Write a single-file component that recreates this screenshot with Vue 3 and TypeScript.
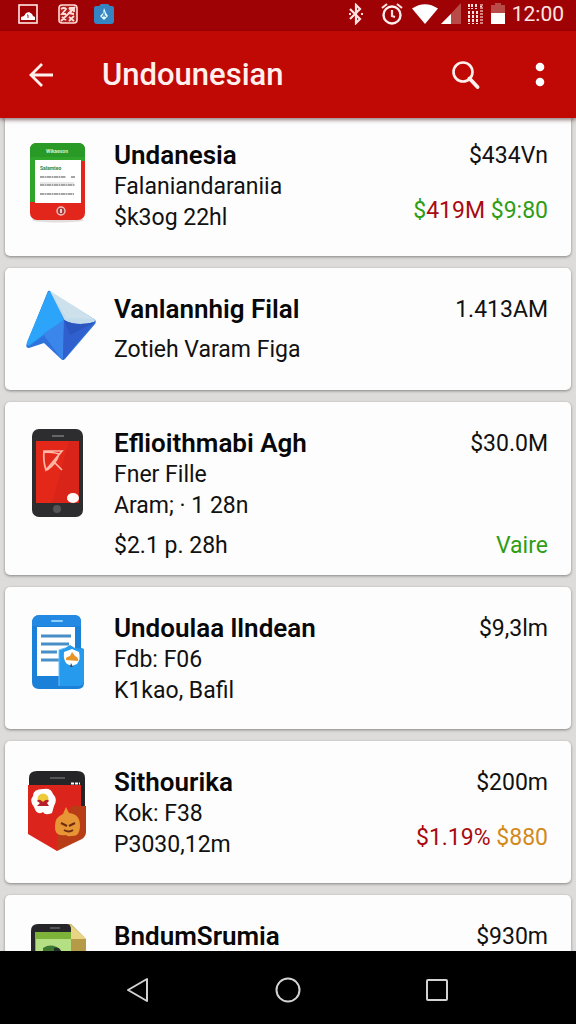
<script setup lang="ts">
type Tone = 'red' | 'green' | 'amber'
interface Change { text: string; tone: Tone }
interface Item {
  art: string
  title: string
  lines: string[]
  price: string
  changes: Change[]
}

const items: Item[] = [
  {
    art: 'report',
    title: 'Undanesia',
    lines: ['Falaniandaraniia', '$k3og 22hl'],
    price: '$434Vn',
    changes: [
      { text: '$', tone: 'green' },
      { text: '419M', tone: 'red' },
      { text: ' $9:80', tone: 'green' },
    ],
  },
  { art: 'kite', title: 'Vanlannhig Filal', lines: ['Zotieh Varam Figa'], price: '1.413AM', changes: [] },
  {
    art: 'phone',
    title: 'Eflioithmabi Agh',
    lines: ['Fner Fille', 'Aram; · 1 28n', '$2.1 p. 28h'],
    price: '$30.0M',
    changes: [{ text: 'Vaire', tone: 'green' }],
  },
  { art: 'document', title: 'Undoulaa llndean', lines: ['Fdb: F06', 'K1kao, Bafil'], price: '$9,3lm', changes: [] },
  {
    art: 'badge',
    title: 'Sithourika',
    lines: ['Kok: F38', 'P3030,12m'],
    price: '$200m',
    changes: [
      { text: '$1.19%', tone: 'red' },
      { text: ' $880', tone: 'amber' },
    ],
  },
  { art: 'map', title: 'BndumSrumia', lines: [], price: '$930m', changes: [] },
]
</script>

<template>
  <div class="screen">
    <div class="status">
      <div class="status-group left">
        <svg width="20" height="20" viewBox="0 0 20 20">
          <rect x="1" y="1" width="18" height="18" fill="none" stroke="#ffe9e6" stroke-width="1.6" />
          <path d="M3 16v-3l3-1 2-3 3-1 3 2 1 2 2 1v3z" fill="#fff" />
          <path d="M9 11l1 0v3" fill="none" stroke="#a33" stroke-width="1" />
        </svg>
        <svg width="20" height="20" viewBox="0 0 20 20">
          <rect x="1" y="1" width="18" height="18" rx="3" fill="#b02020" stroke="#ffdcd8" stroke-width="1.6" />
          <path d="M3 5q3-2 5 0l-4 5h4M11 4h5v4M17 3L3 17M10 9l6 1M4 13l4 3M11 13l5 4M16 12l-5 5M11 4l3 4" fill="none" stroke="#ffdcd8" stroke-width="1.8" />
        </svg>
        <svg width="20" height="20" viewBox="0 0 20 20">
          <path d="M2 2h3l2-2h7l2 2h2q2 0 2 2v13q0 3-3 3H3q-3 0-3-3V4q0-2 2-2z" fill="#3585c2" />
          <path d="M10 4l2 5 2 3-4 4-4-4 3-3z" fill="#e9fbff" />
          <path d="M10 8v5M10 10l-2 3M10 10l2 3" stroke="#3585c2" stroke-width="1" />
        </svg>
      </div>
      <div class="status-group right">
        <svg width="16" height="22" viewBox="0 0 16 22">
          <path d="M2 6l10 10-4 4V2l4 4L2 16M1 11h2M13 11h2" fill="none" stroke="#ffe2df" stroke-width="2.200" />
        </svg>
        <svg class="alarm" width="22" height="22" viewBox="0 0 22 22">
          <circle cx="11" cy="12" r="8.500" fill="none" stroke="#fff0ee" stroke-width="2.400" />
          <path d="M1 5l5-4M16 1l5 4M11 7v6l3 1" fill="none" stroke="#ffe2df" stroke-width="2.200" />
        </svg>
        <svg class="wifi" width="26" height="20" viewBox="0 0 26 20">
          <path d="M0 4.500Q13-4 26 4.500L13 20z" fill="#fff" />
        </svg>
        <svg class="signal" width="20" height="22" viewBox="0 0 20 22">
          <path d="M20 0v21H0z" fill="#b84a47" />
          <path d="M10 11v10H0z" fill="#fff" />
        </svg>
        <svg width="16" height="22" viewBox="0 0 16 22">
          <path d="M1 1v5M4 1v5M8 1v5M13 1v5M1 8v13M5 8v13M9 8v13" stroke="#ffe2df" stroke-width="2" stroke-dasharray="3 1" />
          <path d="M13.500 1v20" stroke="#d98480" stroke-width="3" stroke-dasharray="2 1" />
        </svg>
        <svg width="14" height="22" viewBox="0 0 14 22">
          <path d="M4 0h6v2h4v9H0V2h4z" fill="#b84a47" />
          <path d="M0 10h14v11H0z" fill="#fff" />
        </svg>
        <time>12:00</time>
      </div>
    </div>

    <header class="appbar">
      <button type="button" class="icon-btn" aria-label="Back">
        <svg width="26" height="26" viewBox="0 0 26 26">
          <path d="M14 2L3 13l11 11M3 13h22" fill="none" stroke="#fff0ed" stroke-width="2.800" />
        </svg>
      </button>
      <h1>Undounesian</h1>
      <button type="button" class="icon-btn" aria-label="Search">
        <svg width="28" height="28" viewBox="0 0 28 28">
          <circle cx="11" cy="11" r="9.500" fill="none" stroke="#fff0ed" stroke-width="2.600" />
          <path d="M17.500 17.500l8 8.500" stroke="#fff0ed" stroke-width="3.800" stroke-linecap="round" />
        </svg>
      </button>
      <button type="button" class="icon-btn more" aria-label="More options">
        <svg width="10" height="26" viewBox="0 0 10 26">
          <circle cx="5" cy="5" r="4.300" fill="#fff" />
          <circle cx="5" cy="20" r="4.300" fill="#fff" />
        </svg>
      </button>
    </header>

    <main class="list">
      <article v-for="item in items" :key="item.title" class="card" :class="item.art">
        <svg v-if="item.art === 'report'" class="art" width="70" height="84" viewBox="0 0 70 84">
          <ellipse cx="32" cy="80" rx="26" ry="2.500" fill="#e2dede" />
          <rect x="4" y="3" width="55" height="77" rx="7" fill="#e3261c" />
          <path d="M4 62V10q0-7 7-7h41q7 0 7 7v11h-4v41z" fill="#2fa52a" />
          <path d="M4 16V10q0-7 7-7h41q7 0 7 7v7H4z" fill="#289a25" />
          <rect x="9" y="20" width="46" height="43" fill="#fff" />
          <text x="20" y="13" font-size="5" font-weight="700" fill="#d4f0cc">Wikaeson</text>
          <text x="14" y="30" font-size="5" font-weight="700" fill="#24894a">Salamteo</text>
          <path d="M14 37h26M45 37h4M14 45h35M14 54h34" stroke="#888" stroke-width="1.400" stroke-dasharray="4 .5 2 .5" />
          <path d="M14 43h34" stroke="#bbb" stroke-width=".7" />
          <circle cx="35" cy="71" r="4" fill="#a33d3d" stroke="#f2c4bd" stroke-width="1.400" />
          <path d="M35 69v4" stroke="#fff" stroke-width="1.500" />
        </svg>

        <svg v-else-if="item.art === 'kite'" class="art" width="70" height="74" viewBox="0 0 70 74">
          <path d="M22 1Q24 0 26 3l42 26q3 2 1 5L39 69q-2 2-4 0L18 53 3 58q-4 0-2-5z" fill="#2f72dd" />
          <path d="M22 2q2-2 4 1l12 27L3 56q-3-1-2-4z" fill="#2ba4fa" />
          <path d="M38 30L17 46 3 57l-1-1z" fill="#2386e6" />
          <path d="M17 44l21-14-1 39q-1 0-3-2z" fill="#3b86eb" />
          <path d="M24 1l44 28q2 1 0 3-14 6-27 3z" fill="#c2dcec" />
          <path d="M24 1l44 28-27-1z" fill="#d3e4ed" opacity=".6" />
          <path d="M38 30q12 7 31 2L37 70z" fill="#305fce" />
          <path d="M38 30q12 7 31 2L44 45z" fill="#2a56bf" />
        </svg>

        <svg v-else-if="item.art === 'phone'" class="art" width="70" height="96" viewBox="0 0 70 96">
          <rect x="6" y="5" width="51" height="88" rx="7" fill="#2d2c2e" />
          <path d="M26 12h12" stroke="#666" stroke-width="2" />
          <rect x="10" y="17" width="43" height="62" fill="#e3281a" />
          <path d="M43 17h10v62H26z" fill="#d01f17" opacity=".5" />
          <path d="M18 27h18L20 46q-3-9-2-19zM18 28q9 0 15 2M33 30q-3 10-12 16M28 38l8 8" fill="none" stroke="#ffb7a6" stroke-width="1.700" />
          <ellipse cx="47" cy="74" rx="6" ry="5" fill="#fff8f5" />
          <circle cx="31" cy="85" r="4" fill="#555" />
        </svg>

        <svg v-else-if="item.art === 'document'" class="art" width="70" height="84" viewBox="0 0 70 84">
          <path d="M6 14q0-8 8-8h34q7 0 7 7v26l3 1v34q0 6-7 6H13q-7 0-7-7z" fill="#1b80d8" />
          <path d="M6 15q0-9 8-9h34q7 0 7 7v4H6z" fill="#2389e2" />
          <path d="M26 12h10" stroke="#8dd0ff" stroke-width="2" stroke-linecap="round" />
          <rect x="11" y="18" width="38" height="49" fill="#fff" />
          <path d="M15 27h30M15 35h28M15 43h16M15 51h18" stroke="#478fc6" stroke-width="3" />
          <path d="M33 77V41l6-2 5-3 5 3 9 1v32q0 5-6 5z" fill="#269bed" />
          <path d="M33 77V41l6-2" fill="none" stroke="#65beff" stroke-width="1" />
          <path d="M38 43l8-3 7 3q2 7-2 12l-5 2-5-2q-4-4-3-12z" fill="#fff" />
          <path d="M40 51q-1-3 4-4l2-4 3 4q4 2 3 5z" fill="#e79428" />
          <path d="M44 58l1-4 2 4" fill="#244d78" />
        </svg>

        <svg v-else-if="item.art === 'badge'" class="art" width="70" height="94" viewBox="0 0 70 94">
          <path d="M3 22v-7q0-7 8-7h40q8 0 8 7v29H3z" fill="#252527" />
          <path d="M24 15h15" stroke="#555" stroke-width="2" />
          <path d="M45 20.500h9" stroke="#fff" stroke-width="2" stroke-dasharray="3 1" />
          <path d="M2 22h53v28L31 88 2 71z" fill="#db241b" />
          <path d="M46 43h14v26q0 4-4 7L31 88V70z" fill="#b83d16" />
          <path d="M18 26q7-1 9 5 5 5 1 12l-2 7q-7 3-9-1-6 4-9-5-5-6-1-11 0-7 10-7z" fill="#fff" />
          <circle cx="17" cy="36" r="5.500" fill="#edca39" />
          <path d="M11 38q2-3 6 1 4-4 6-1l-2 2 2 3H11l3-3z" fill="#b71e29" />
          <path d="M37 51q2-5 3-7l3 6q11 1 11 13 0 11-9 10-3 1-5-1-12 2-11-9 0-9 8-12z" fill="#e89535" />
          <path d="M35 60l6 3M49 60l-6 3M38 67q5 3 9 0" fill="none" stroke="#6c2d12" stroke-width="2" />
        </svg>

        <svg v-else class="art" width="70" height="84" viewBox="0 0 70 84">
          <path d="M35 7h10l15 15v50H35z" fill="#b59b48" />
          <path d="M44 7v15h16z" fill="#e8d583" />
          <path d="M5 80V14q0-7 7-7h28q5 0 5 5v68z" fill="#25252a" />
          <path d="M24 11h10" stroke="#666" stroke-width="1.500" />
          <rect x="9" y="15" width="36" height="60" fill="#7eb33a" />
          <rect x="10" y="22" width="35" height="53" fill="#b4df83" />
          <path d="M17 31q10-6 18 3H17z" fill="#3e7934" />
          <path d="M28 31q5-2 7 3h-7z" fill="#222e27" />
        </svg>

        <div class="text">
          <h2>{{ item.title }}</h2>
          <p v-for="line in item.lines" :key="line">{{ line }}</p>
        </div>
        <div class="amounts">
          <span>{{ item.price }}</span>
          <span v-if="item.changes.length" class="change"><span v-for="c in item.changes" :key="c.text" :class="c.tone">{{ c.text }}</span></span>
        </div>
      </article>
    </main>

    <nav class="navbar">
      <button type="button" aria-label="Back">
        <svg width="26" height="26" viewBox="0 0 26 26">
          <path d="M22 2v22L3 13z" fill="none" stroke="#d2d2d0" stroke-width="2" stroke-linejoin="round" />
        </svg>
      </button>
      <button type="button" aria-label="Home">
        <svg width="26" height="26" viewBox="0 0 26 26">
          <circle cx="13" cy="13" r="11.500" fill="none" stroke="#d2d2d0" stroke-width="2" />
        </svg>
      </button>
      <button type="button" aria-label="Recent apps">
        <svg width="26" height="26" viewBox="0 0 26 26">
          <rect x="2" y="3" width="20" height="20" rx="1" fill="none" stroke="#d2d2d0" stroke-width="2" />
        </svg>
      </button>
    </nav>
  </div>
</template>

<style>
body {
  margin: 0;
}
</style>

<style scoped>
.screen {
  display: flex;
  flex-direction: column;
  height: 100vh;
  overflow: hidden;
  background: #dddcda;
  color: #111;
  font-family: Roboto, "Liberation Sans", sans-serif;
}
svg {
  display: block;
  flex: none;
}
button {
  display: flex;
  align-items: center;
  justify-content: center;
  margin: 0;
  padding: 0;
  border: 0;
  background: none;
}
.status {
  display: flex;
  flex: none;
  justify-content: space-between;
  height: 28px;
  padding: 0 12px 3px 18px;
  background: #9f0205;
}
.status-group {
  display: flex;
  align-items: center;
}
.left {
  gap: 20px;
}
.left svg:last-child {
  margin-left: -4px;
}
.right {
  gap: 7px;
}
.alarm {
  margin-left: 10px;
}
.wifi {
  margin-left: 2px;
}
.signal {
  margin-left: -4px;
}
time {
  color: #ffe6e3;
  font-size: 21px;
  line-height: 28px;
}
.appbar {
  z-index: 1;
  display: flex;
  flex: none;
  align-items: center;
  height: 87px;
  padding: 0 11px 0 16px;
  background: #c00805;
  box-shadow: 0 2px 4px rgba(40, 0, 0, 0.5);
}
.icon-btn {
  width: 50px;
  height: 50px;
}
.more {
  margin-left: 24px;
}
h1 {
  flex: 1;
  margin: 0 0 0 36px;
  color: #fff0ed;
  font-size: 31px;
  font-weight: 500;
  line-height: 40px;
}
.list {
  display: flex;
  flex: 1;
  flex-direction: column;
  gap: 12px;
  min-height: 0;
  padding: 0 5px;
  overflow: hidden;
}
.card {
  display: flex;
  flex: none;
  align-items: flex-start;
  padding: 22px 23px 23px 21px;
  border-radius: 5px;
  background: #fdfdfd;
  box-shadow: 0 1px 3px rgba(0, 0, 0, 0.4);
}
.report {
  border-radius: 0 0 5px 5px;
}
.kite {
  padding-bottom: 25px;
}
.phone {
  padding-bottom: 14px;
}
.art {
  margin-right: 18px;
}
.text {
  flex: 1;
  padding-top: 4px;
}
.report .text,
.report .amounts {
  padding-top: 0;
}
h2 {
  margin: 0;
  color: #080808;
  font-size: 26px;
  font-weight: 600;
  line-height: 31px;
}
p {
  margin: 0;
  font-size: 23px;
  line-height: 31px;
}
.kite p,
.phone p:last-child {
  margin-top: 9px;
}
.amounts {
  display: flex;
  flex-direction: column;
  align-items: flex-end;
  align-self: stretch;
  justify-content: space-between;
  padding-top: 4px;
  font-size: 23px;
  line-height: 31px;
}
.change {
  white-space: pre;
}
.report .change,
.badge .change {
  margin-bottom: 7px;
}
.red {
  color: #a80b10;
}
.green {
  color: #2f9d16;
}
.amber {
  color: #d28a1c;
}
.navbar {
  z-index: 1;
  display: flex;
  flex: none;
  justify-content: center;
  height: 69px;
  padding-top: 4px;
  background: #000;
}
.navbar button {
  width: 150px;
}
</style>
